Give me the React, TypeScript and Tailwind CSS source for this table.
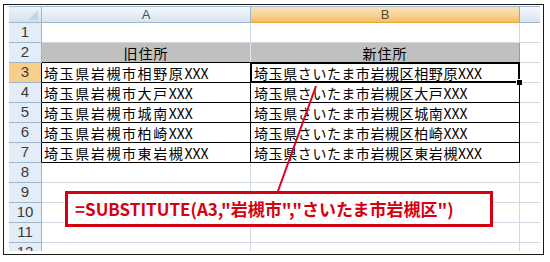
import React from "react";

const places = ["相野原", "大戸", "城南", "柏崎", "東岩槻"];

const rows = Array.from({ length: 12 }, (_, i) => i + 1);

function RowHead({ n }: { n: number }) {
  const inTable = n >= 3 && n <= 7;
  return (
    <div
      className={
        "h-[20px] flex items-center justify-center border-b border-r border-b-[#9eb6ce] text-[15px] text-[#3b3b3b] " +
        (n === 3 ? "bg-[#f8cf8a] " : "bg-[#e4ecf7] ") +
        (inTable ? "border-r-black" : "border-r-[#9eb6ce]")
      }
      style={{ fontFamily: '"Liberation Sans", Arial, sans-serif' }}
    >
      {n}
    </div>
  );
}

function Cell({ n, col }: { n: number; col: "A" | "B" }) {
  const cjk = { fontFamily: '"Noto Sans CJK JP", "Noto Sans", sans-serif' };
  if (n === 2) {
    return (
      <div
        className={
          "h-[20px] flex items-center justify-center bg-[#c0c0c0] border-b border-b-black text-[14px] tracking-[1px] text-black leading-none " +
          (col === "A" ? "border-r border-r-[#e6e6e6]" : "border-r border-r-[#9a9a9a]")
        }
        style={cjk}
      >
        {col === "A" ? "旧住所" : "新住所"}
      </div>
    );
  }
  if (n >= 3 && n <= 7) {
    const place = places[n - 3];
    return (
      <div
        className={
          "relative h-[20px] flex items-center border-b border-r border-black text-[14px] text-black leading-none whitespace-nowrap " +
          (col === "A" ? "pl-[2px] tracking-[1.6px]" : "pl-[3px] tracking-[0.6px]")
        }
        style={cjk}
      >
        <span>
          {col === "A" ? "埼玉県岩槻市" + place : "埼玉県さいたま市岩槻区" + place}
          <span className="tracking-normal">XXX</span>
        </span>
        {col === "B" && n === 3 && (
          <>
            <div className="absolute -inset-px border-2 border-black" />
            <div className="absolute -right-[4px] -bottom-[4px] w-[7px] h-[7px] bg-black border border-white" />
          </>
        )}
      </div>
    );
  }
  return <div className="h-[20px] border-b border-r border-[#d0d7e5] bg-white" />;
}

export default function App() {
  return (
    <div className="w-[550px] h-[262px] bg-white pt-[4px] pl-[3px]">
      <div className="relative w-[541px] h-[251px] border border-[#1a1a1a] pl-[5px] pt-[1px]">
        <div className="h-[245px] overflow-hidden">
          <div className="grid grid-cols-[33px_209px_269px_20px]">
            {/* column headers */}
            <div className="relative h-[17px] border-t border-r border-b border-[#9eb6ce] bg-linear-to-b from-[#eef3fa] to-[#d6e0ee]">
              <svg className="absolute right-[3px] bottom-[2px]" width="10" height="10" viewBox="0 0 10 10">
                <polygon points="10,0 10,10 0,10" fill="#c9d4e3" />
              </svg>
            </div>
            <div
              className="h-[17px] flex items-center justify-center border-t border-r border-b border-[#9eb6ce] bg-linear-to-b from-[#f6f9fd] to-[#d9e3f0] text-[13px] text-[#45505e]"
              style={{ fontFamily: '"Liberation Sans", Arial, sans-serif' }}
            >
              A
            </div>
            <div
              className="h-[17px] flex items-center justify-center border-t border-r border-b border-t-[#9eb6ce] border-r-[#d9a24a] border-b-[#e8a53c] bg-linear-to-b from-[#f9e3bb] via-[#f8d597] to-[#f2bd62] text-[13px] text-[#5a4a2e]"
              style={{ fontFamily: '"Liberation Sans", Arial, sans-serif' }}
            >
              B
            </div>
            <div className="h-[17px] border-t border-b border-[#9eb6ce] bg-linear-to-b from-[#f6f9fd] to-[#d9e3f0]" />

            {rows.map((n) => (
              <React.Fragment key={n}>
                <RowHead n={n} />
                <Cell n={n} col="A" />
                <Cell n={n} col="B" />
                <div className="h-[20px] border-b border-[#d0d7e5] bg-white" />
              </React.Fragment>
            ))}
          </div>
        </div>

        <svg className="absolute left-0 top-0 pointer-events-none" width="539" height="249">
          <line x1="312" y1="81" x2="274" y2="186" stroke="#e3001b" strokeWidth="2" />
        </svg>

        <div
          className="absolute left-[61px] top-[186px] w-[428px] h-[36px] border-[3px] border-[#d7000f] bg-white flex items-center pl-[7px] text-[17px] font-bold text-[#d7000f] whitespace-nowrap"
          style={{ fontFamily: '"Noto Sans CJK JP", "Noto Sans", sans-serif' }}
        >
          =SUBSTITUTE(A3,"岩槻市","さいたま市岩槻区")
        </div>
      </div>
    </div>
  );
}
